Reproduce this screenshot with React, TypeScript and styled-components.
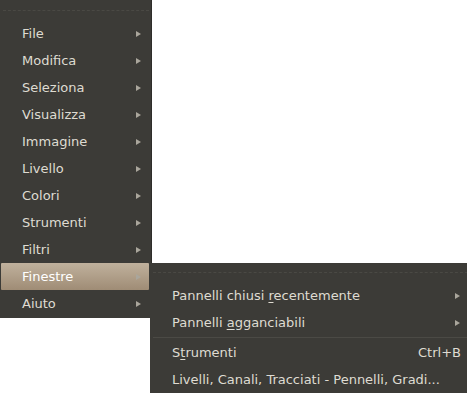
import React from 'react';
import styled, { createGlobalStyle } from 'styled-components';

const GlobalStyle = createGlobalStyle`
  html, body {
    margin: 0;
    padding: 0;
    background: #ffffff;
  }
  body {
    font-family: 'DejaVu Sans', 'Noto Sans', sans-serif;
    font-size: 13px;
  }
`;

const Screen = styled.div`
  display: flex;
  align-items: flex-start;
  width: 467px;
  height: 393px;
  overflow: hidden;
`;

const Menu = styled.div<{ $top?: number; $width: number }>`
  flex: none;
  width: ${(p) => p.$width}px;
  margin-top: ${(p) => p.$top || 0}px;
  background: #3c3b37;
  box-sizing: border-box;
  padding: 0 0 1px 1px;
  display: flex;
  flex-direction: column;
`;

const MainMenu = styled(Menu)`
  border-right: 1px solid #2e2d2a;
`;

const SubMenu = styled(Menu)`
  margin-left: -2px;
`;

const TearOff = styled.div<{ $h: number }>`
  height: ${(p) => p.$h}px;
  display: flex;
  align-items: center;
  padding: 0 2px;
  &::after {
    content: '';
    flex: 1;
    border-top: 1px dashed #4a4944;
  }
`;

const Item = styled.div<{ $active?: boolean }>`
  height: 27px;
  display: flex;
  align-items: center;
  padding: 0 6px 0 21px;
  color: ${(p) => (p.$active ? '#ffffff' : '#dfdbd2')};
  background: ${(p) =>
    p.$active ? 'linear-gradient(to bottom, #c0b19d, #9f8c75)' : 'transparent'};
  border-radius: 1px;
  margin-right: 2px;
  white-space: nowrap;
`;

const Label = styled.span`
  flex: 1;
`;

const Accel = styled.span`
  padding-right: 1px;
`;

const Arrow = styled.span`
  width: 0;
  height: 0;
  border-top: 3.5px solid transparent;
  border-bottom: 3.5px solid transparent;
  border-left: 5px solid #aaa69c;
  margin-right: 2px;
`;

const Mn = styled.span`
  text-decoration: underline;
  text-underline-offset: 2px;
`;

const Separator = styled.div`
  height: 1px;
  margin: 1px 3px 1px 2px;
  background: #4b4a45;
`;

const mainItems = [
  'File',
  'Modifica',
  'Seleziona',
  'Visualizza',
  'Immagine',
  'Livello',
  'Colori',
  'Strumenti',
  'Filtri',
  'Finestre',
  'Aiuto',
];

export default function App() {
  return (
    <Screen>
      <GlobalStyle />
      <MainMenu $width={152}>
        <TearOff $h={20} />
        {mainItems.map((name) => (
          <Item key={name} $active={name === 'Finestre'}>
            <Label>{name}</Label>
            <Arrow />
          </Item>
        ))}
      </MainMenu>
      <SubMenu $top={263} $width={320}>
        <TearOff $h={19} />
        <Item>
          <Label>
            Pannelli chiusi <Mn>r</Mn>ecentemente
          </Label>
          <Arrow />
        </Item>
        <Item>
          <Label>
            Pannelli <Mn>a</Mn>gganciabili
          </Label>
          <Arrow />
        </Item>
        <Separator />
        <Item>
          <Label>
            S<Mn>t</Mn>rumenti
          </Label>
          <Accel>Ctrl+B</Accel>
        </Item>
        <Item>
          <Label>Livelli, Canali, Tracciati - Pennelli, Gradi...</Label>
        </Item>
      </SubMenu>
    </Screen>
  );
}
